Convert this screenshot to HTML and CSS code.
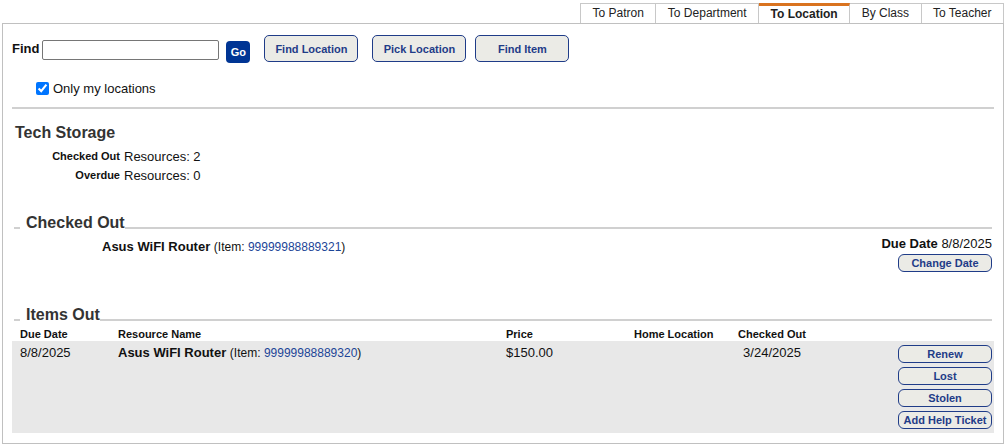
FILE: index.html
```html
<!DOCTYPE html>
<html lang="en">
<head>
  <meta charset="UTF-8" />
  <title>Check Out - To Location</title>
  <link rel="stylesheet" href="styles.css">
</head>
<body>

  <div class="tabs">
    <a class="tab">To Patron</a>
    <a class="tab">To Department</a>
    <a class="tab active">To Location</a>
    <a class="tab">By Class</a>
    <a class="tab">To Teacher</a>
  </div>

  <div class="panel">
    <div class="find-row">
      <label class="find-label">Find</label>
      <input type="text" class="find-input">
      <button class="go">Go</button>
      <button class="btn btn-big first">Find Location</button>
      <button class="btn btn-big">Pick Location</button>
      <button class="btn btn-big last">Find Item</button>
    </div>

    <label class="only-mine"><input type="checkbox" checked> Only my locations</label>

    <hr class="rule">

    <h1 class="loc-name">Tech Storage</h1>
    <div class="stats">
      <div class="stat-label">Checked Out</div><div>Resources: 2</div>
      <div class="stat-label">Overdue</div><div>Resources: 0</div>
    </div>

    <div class="section-title">
      <span class="dash"></span>
      <h2>Checked Out</h2>
      <span class="line"></span>
    </div>

    <div class="checked-item">
      <div class="item-name">
        <b>Asus WiFI Router</b> <span class="small">(Item: <a href="#">99999988889321</a>)</span>
      </div>
      <div class="due">
        <div><b>Due Date</b> 8/8/2025</div>
        <button class="btn btn-small">Change Date</button>
      </div>
    </div>

    <div class="section-title items-title">
      <span class="dash"></span>
      <h2>Items Out</h2>
      <span class="line"></span>
    </div>

    <table class="items">
      <colgroup>
        <col style="width:98px">
        <col style="width:388px">
        <col style="width:128px">
        <col style="width:104px">
        <col style="width:84px">
        <col>
      </colgroup>
      <thead>
        <tr>
          <th>Due Date</th>
          <th>Resource Name</th>
          <th>Price</th>
          <th>Home Location</th>
          <th class="center">Checked Out</th>
          <th></th>
        </tr>
      </thead>
      <tbody>
        <tr>
          <td>8/8/2025</td>
          <td><b>Asus WiFI Router</b> <span class="small">(Item: <a href="#">99999988889320</a>)</span></td>
          <td>$150.00</td>
          <td></td>
          <td class="center">3/24/2025</td>
          <td class="actions">
            <button class="btn btn-small">Renew</button>
            <button class="btn btn-small">Lost</button>
            <button class="btn btn-small">Stolen</button>
            <button class="btn btn-small">Add Help Ticket</button>
          </td>
        </tr>
      </tbody>
    </table>
  </div>

</body>
</html>
```

FILE: styles.css
```css
body {
  margin: 0;
  font-family: "Liberation Sans", Arial, sans-serif;
  font-size: 13px;
  color: #111;
  background: #fff;
}

a {
  color: #1c4597;
  text-decoration: none;
}

/* tabs */
.tabs {
  display: flex;
  justify-content: flex-end;
  margin: 3px 4px 0 0;
}

.tab {
  height: 19px;
  line-height: 18px;
  padding: 0 11.5px;
  font-size: 12px;
  color: #222;
  border: 1px solid #c8c8c8;
  border-bottom: none;
  border-left: none;
}

.tab:first-child {
  border-left: 1px solid #c8c8c8;
}

.tab.active {
  font-weight: bold;
  border-top: 3px solid #d9731f;
  height: 17px;
  line-height: 16px;
}

/* panel */
.panel {
  margin: 0 4px 0 2px;
  border: 1px solid #c0c0c0;
  padding: 11px 9px 10px 9px;
}

.find-row {
  display: flex;
  align-items: center;
  height: 27px;
}

.find-label {
  font-weight: bold;
  font-size: 13px;
  margin-right: 3px;
}

.find-input {
  width: 173px;
  height: 16px;
  border: 1px solid #767676;
  border-radius: 2px;
  padding: 1px;
  margin: 3px 0 0 0;
}

.go {
  width: 24px;
  height: 22px;
  margin: 6px 0 0 7px;
  border: none;
  border-radius: 4px;
  background: #003594;
  color: #fff;
  font-family: "Liberation Sans", Arial, sans-serif;
  font-weight: bold;
  font-size: 11px;
  padding: 0;
}

.btn {
  font-family: "Liberation Sans", Arial, sans-serif;
  font-weight: bold;
  font-size: 11px;
  color: #1f3c88;
  background: #ebebe6;
  border: 1px solid #1f3c88;
  border-radius: 5px;
  padding: 0;
  cursor: pointer;
}

.btn-big {
  width: 94px;
  height: 27px;
  margin-left: 14px;
}

.btn-big.last {
  margin-left: 9px;
}

.btn-small {
  display: block;
  width: 94px;
  height: 18px;
  border-radius: 6px;
}

.only-mine {
  display: flex;
  align-items: center;
  margin: 18px 0 0 24px;
  height: 16px;
  font-size: 13px;
  gap: 4px;
}

.only-mine input {
  width: 13px;
  height: 13px;
  margin: 0;
}

.rule {
  border: none;
  border-top: 2px solid #d0d0d0;
  margin: 11px 0 0 0;
}

.loc-name {
  font-size: 16px;
  line-height: 20px;
  color: #333;
  margin: 14px 0 0 3px;
}

.stats {
  display: grid;
  grid-template-columns: 108px auto;
  column-gap: 4px;
  line-height: 19px;
  margin-top: 4px;
}

.stat-label {
  text-align: right;
  font-weight: bold;
  font-size: 11px;
}

/* section headings */
.section-title {
  display: flex;
  align-items: flex-end;
  margin-top: 28px;
}

.section-title h2 {
  font-size: 16px;
  line-height: 20px;
  color: #333;
  margin: 0 0 0 6px;
}

.section-title .dash,
.section-title .line {
  height: 2px;
  background: #d0d0d0;
  margin-bottom: 4px;
}

.section-title .dash {
  width: 6px;
  margin-left: 2px;
}

.section-title .line {
  flex: 1;
  margin-right: 2px;
}

.items-title {
  margin-top: 33px;
}

.small {
  font-size: 12px;
}

.checked-item {
  display: flex;
  justify-content: space-between;
  margin-top: 3px;
  padding: 0 2px 0 90px;
  line-height: 16px;
}

.item-name {
  padding-top: 3px;
}

.due {
  display: flex;
  flex-direction: column;
  align-items: flex-end;
}

.due .btn-small {
  margin-top: 2px;
}

/* items table */
.items {
  width: 100%;
  border-collapse: collapse;
  table-layout: fixed;
}

.items th {
  font-size: 11px;
  text-align: left;
  padding: 2px 0 1px 8px;
  height: 13px;
}

.items td {
  vertical-align: top;
  padding: 4px 0 4px 8px;
  background: #e8e8e8;
  line-height: 16px;
}

.items .center {
  text-align: center;
  padding-left: 0;
}

.items td.actions {
  padding: 4px 2px 4px 0;
}

.actions .btn-small {
  margin: 0 0 4px auto;
}

.actions .btn-small:last-child {
  margin-bottom: 0;
}
```
